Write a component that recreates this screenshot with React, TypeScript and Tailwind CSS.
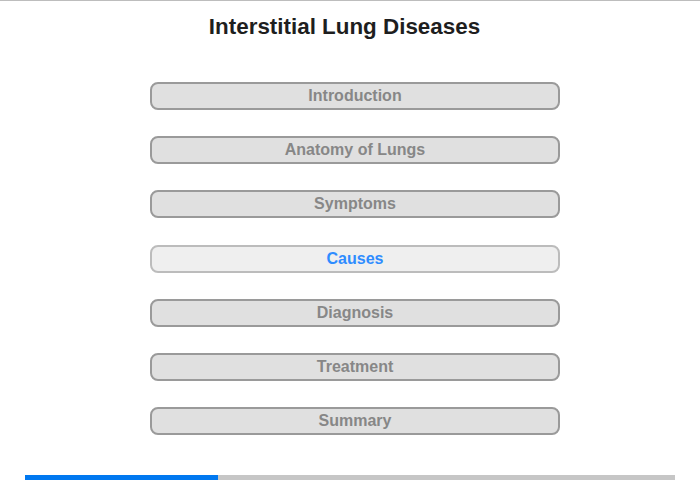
import React from "react";

const items = [
  "Introduction",
  "Anatomy of Lungs",
  "Symptoms",
  "Causes",
  "Diagnosis",
  "Treatment",
  "Summary",
];

export default function App() {
  return (
    <div
      className="w-[700px] h-[480px] bg-white border-t border-[#bdbdbd] flex flex-col overflow-hidden"
      style={{ fontFamily: '"Liberation Sans", Arial, sans-serif' }}
    >
      <h1 className="mt-[14px] w-[689px] text-center text-[22.4px] leading-[24px] font-bold text-[#1e1e1e]">
        Interstitial Lung Diseases
      </h1>
      <div className="mt-[43px] ml-[150px] flex flex-col gap-[26.2px]">
        {items.map((t) =>
          t === "Causes" ? (
            <div
              key={t}
              className="w-[410px] h-[28px] rounded-[8px] border-2 border-[#bcbcbc] bg-[#efefef] flex items-center justify-center text-[16px] font-bold text-[#2e8cff]"
            >
              {t}
            </div>
          ) : (
            <div
              key={t}
              className="w-[410px] h-[28px] rounded-[8px] border-2 border-[#9a9a9a] bg-[#e0e0e0] flex items-center justify-center text-[16px] font-bold text-[#878787]"
            >
              {t}
            </div>
          )
        )}
      </div>
      <div className="mt-auto ml-[25px] w-[650px] h-[5px] bg-[#c6c6c6] flex">
        <div className="w-[193px] h-full bg-[#0078f0]" />
      </div>
    </div>
  );
}
